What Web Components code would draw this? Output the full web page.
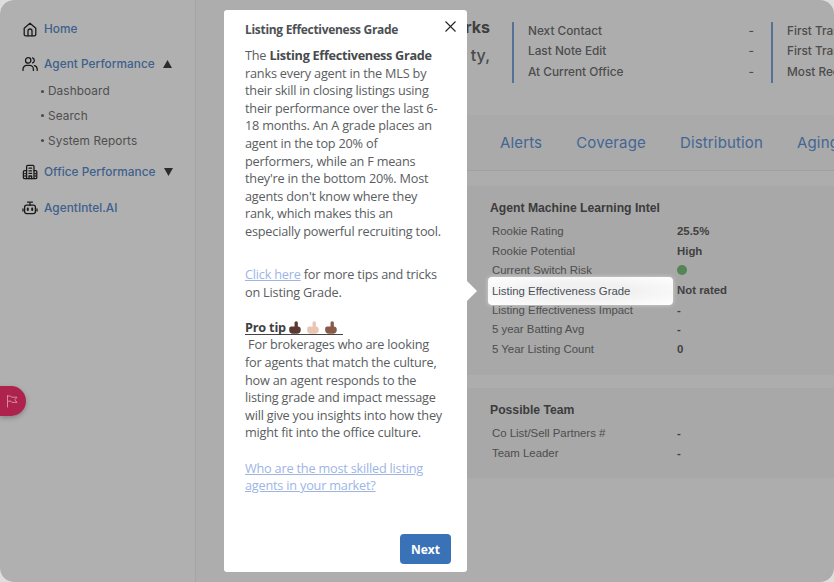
<!DOCTYPE html>
<html>
<head>
<meta charset="utf-8">
<title>Listing Effectiveness Grade</title>
<style>
  html, body { margin: 0; padding: 0; height: 100%; background: #dedede; }
  body { overflow: hidden; }
</style>
</head>
<body>
<app-shell>
  <side-nav slot="nav">
    <nav-item label="Home" icon="home"></nav-item>
    <nav-item label="Agent Performance" icon="users" caret="up">
      <sub-item>Dashboard</sub-item>
      <sub-item>Search</sub-item>
      <sub-item>System Reports</sub-item>
    </nav-item>
    <nav-item label="Office Performance" icon="office" caret="down"></nav-item>
    <nav-item label="AgentIntel.AI" icon="bot"></nav-item>
  </side-nav>

  <profile-header></profile-header>
  <tab-strip></tab-strip>

  <intel-card heading="Agent Machine Learning Intel">
    <intel-row label="Rookie Rating" value="25.5%"></intel-row>
    <intel-row label="Rookie Potential" value="High"></intel-row>
    <intel-row label="Current Switch Risk" dot></intel-row>
    <intel-row label="Listing Effectiveness Grade" value="Not rated" active></intel-row>
    <intel-row label="Listing Effectiveness Impact" value="-"></intel-row>
    <intel-row label="5 year Batting Avg" value="-"></intel-row>
    <intel-row label="5 Year Listing Count" value="0"></intel-row>
  </intel-card>
  <intel-card heading="Possible Team" class="second">
    <intel-row label="Co List/Sell Partners #" value="-"></intel-row>
    <intel-row label="Team Leader" value="-"></intel-row>
  </intel-card>

  <flag-button slot="over"></flag-button>
  <tour-popup slot="over"></tour-popup>
</app-shell>

<script>
(function () {
    const icons = {
        home: '<path d="M2.2 7.2 8 2.2l5.8 5v6.2a1.4 1.4 0 0 1-1.4 1.4H3.6a1.4 1.4 0 0 1-1.4-1.4z"/><path d="M6 14.800V10a2 2 0 0 1 4 0v4.800"/>',
        users: '<circle cx="6.2" cy="4.4" r="2.7"/><path d="M1 14.4v-1.2a3.8 3.8 0 0 1 3.8-3.8h2.8a3.8 3.8 0 0 1 3.8 3.8v1.2"/><path d="M10.6 1.9a2.7 2.7 0 0 1 0 5"/><path d="M12.4 9.6a3.8 3.8 0 0 1 2.8 3.6v1.2"/>',
        office: '<path d="M4.6 14.6V2.6a1.2 1.2 0 0 1 1.2-1.2h5a1.2 1.2 0 0 1 1.2 1.2v12"/><path d="M4.6 6.6H2.6a1.2 1.2 0 0 0-1.2 1.2v5.6a1.2 1.2 0 0 0 1.2 1.2h11a1.2 1.2 0 0 0 1.2-1.2V7.8a1.2 1.2 0 0 0-1.2-1.2H12"/><path d="M7 4.2h2.6M7 6.8h2.6M7 9.4h2.6M7 14.6v-2.6h2.6v2.6M2.8 9.6h.6M2.8 12h.6M13 9.6h.6M13 12h.6"/>',
        bot: '<rect x="2.6" y="5.2" width="10.8" height="8.4" rx="2"/><path d="M8 5.2V3.4M5.6 2.2h4.8M1 9v2M15 9v2"/><path d="M5.8 8.6v1.4M10.2 8.6v1.4" stroke-width="2"/>'
    };

    const shellTemplate = document.createElement("template");
    shellTemplate.innerHTML = `
    <style>
    :host {
        display: flex;
        position: relative;
        width: 834px;
        height: 582px;
        overflow: hidden;
        border-radius: 14px;
        background: #fbfbfb;
    }
    .nav { flex: 0 0 196px; border-right: 1px solid #f0f0f0; background: #fff; box-sizing: border-box; }
    .main { flex: 1; min-width: 0; padding-left: 44px; overflow: hidden; }
    .overlay { position: absolute; inset: 0; z-index: 10; background: rgba(0, 0, 0, .31); }
    </style>
    <div class="nav"><slot name="nav"></slot></div>
    <div class="main"><slot></slot></div>
    <div class="overlay"></div>
    <slot name="over"></slot>
    `;
    class AppShell extends HTMLElement {
        constructor() {
            super();
            this.attachShadow({mode: "open"}).appendChild(shellTemplate.content.cloneNode(true));
        }
    }

    const sideNavTemplate = document.createElement("template");
    sideNavTemplate.innerHTML = `
    <style>
    :host { display: flex; flex-direction: column; padding: 20px 0 0 22px; }
    </style>
    <slot></slot>
    `;
    class SideNav extends HTMLElement {
        constructor() {
            super();
            this.attachShadow({mode: "open"}).appendChild(sideNavTemplate.content.cloneNode(true));
        }
    }

    class NavItem extends HTMLElement {
        constructor() {
            super();
            this.attachShadow({mode: "open"});
        }
        connectedCallback() {
            const caret = this.getAttribute("caret");
            const glyph = caret === "up" ? '<path d="M0 8 4.5 0 9 8z"/>' : '<path d="M0 0h9L4.500 8z"/>';
            this.shadowRoot.innerHTML = `
            <style>
            :host { display: block; margin-bottom: 17.4px; font: 500 11.8px/18px Inter, sans-serif; }
            .row { display: flex; align-items: center; height: 18px; color: #5b8bcb; letter-spacing: .05px; }
            .icon { width: 16px; height: 16px; margin-right: 6px; fill: none; stroke: #262626; stroke-width: 1.3; stroke-linecap: round; stroke-linejoin: round; }
            .caret { width: 9px; height: 8px; margin-left: 8px; fill: #404040; }
            .subs { display: flex; flex-direction: column; gap: 6.6px; padding: 9px 0 0 19px; margin-bottom: -3.5px; }
            </style>
            <div class="row">
                <svg class="icon" viewBox="0 0 16 16">${icons[this.getAttribute("icon")]}</svg>
                <span>${this.getAttribute("label")}</span>
                ${caret ? `<svg class="caret" viewBox="0 0 9 8">${glyph}</svg>` : ""}
            </div>
            <div class="subs"><slot></slot></div>
            `;
            if (!this.children.length) this.shadowRoot.querySelector(".subs").remove();
        }
    }

    const subItemTemplate = document.createElement("template");
    subItemTemplate.innerHTML = `
    <style>
    :host { display: flex; align-items: center; font: 400 11.8px/18px Inter, sans-serif; color: #737373; letter-spacing: .1px; }
    .dot { width: 3px; height: 3px; border-radius: 50%; background: #6a6a6a; margin-right: 4px; }
    </style>
    <span class="dot"></span><slot></slot>
    `;
    class SubItem extends HTMLElement {
        constructor() {
            super();
            this.attachShadow({mode: "open"}).appendChild(subItemTemplate.content.cloneNode(true));
        }
    }

    const headerTemplate = document.createElement("template");
    headerTemplate.innerHTML = `
    <style>
    :host { display: flex; height: 115px; box-sizing: border-box; padding: 22px 0 0 0; margin-left: -44px; font: 500 11.8px/20.3px Inter, sans-serif; color: #707070; white-space: nowrap; }
    .title { flex: none; width: 294px; padding-right: 22px; margin-top: -9px; text-align: right; font-size: 16px; line-height: 28px; color: #6a6a6a; }
    .title b { display: block; font-weight: 700; color: #5c5c5c; }
    .title span { display: block; font-weight: 500; }
    .col { flex: none; height: 61px; border-left: 2px solid #7ba4da; padding-left: 14px; box-sizing: border-box; }
    .first { width: 259px; padding-right: 17px; }
    .col div { display: flex; justify-content: space-between; height: 20.3px; margin-top: -1px; margin-bottom: 1px; }
    </style>
    <div class="title"><b>rks</b><span>ty,</span></div>
    <div class="col first">
        <div><span>Next Contact</span><span>-</span></div>
        <div><span>Last Note Edit</span><span>-</span></div>
        <div><span>At Current Office</span><span>-</span></div>
    </div>
    <div class="col">
        <div><span>First Tran</span></div>
        <div><span>First Tran</span></div>
        <div><span>Most Rec</span></div>
    </div>
    `;
    class ProfileHeader extends HTMLElement {
        constructor() {
            super();
            this.attachShadow({mode: "open"}).appendChild(headerTemplate.content.cloneNode(true));
        }
    }

    const tabsTemplate = document.createElement("template");
    tabsTemplate.innerHTML = `
    <style>
    :host { display: flex; align-items: center; height: 56px; margin-bottom: 15px; box-sizing: border-box; padding: 1px 0 0 260px; gap: 34px; border-bottom: 1px solid #e8e8e8; background: #f7f7f7; font: 400 15px/20px Inter, sans-serif; letter-spacing: .15px; color: #6294d6; white-space: nowrap; overflow: hidden; }
    </style>
    <span>Alerts</span><span>Coverage</span><span>Distribution</span><span>Aging</span>
    `;
    class TabStrip extends HTMLElement {
        constructor() {
            super();
            this.attachShadow({mode: "open"}).appendChild(tabsTemplate.content.cloneNode(true));
        }
    }

    class IntelCard extends HTMLElement {
        constructor() {
            super();
            this.attachShadow({mode: "open"});
        }
        connectedCallback() {
            this.shadowRoot.innerHTML = `
            <style>
            :host { display: block; margin-bottom: 13px; padding: 13px 0 15px 248px; background: #f3f3f3; font: 11.4px/20px "Liberation Sans", Arial, sans-serif; }
            h3 { margin: 0 0 5px 2px; font: 700 12.2px/18px "Liberation Sans", Arial, sans-serif; color: #585858; }
            </style>
            <h3>${this.getAttribute("heading")}</h3>
            <slot></slot>
            `;
        }
    }

    class IntelRow extends HTMLElement {
        constructor() {
            super();
            this.attachShadow({mode: "open"});
        }
        connectedCallback() {
            const value = this.hasAttribute("dot") ? '<i class="dot"></i>' : this.getAttribute("value");
            this.shadowRoot.innerHTML = `
            <style>
            :host { display: flex; height: 19.7px; line-height: 19.7px; color: #717171; white-space: nowrap; }
            .label { width: 185px; box-sizing: border-box; padding-left: 4px; }
            .value { padding-left: 4px; font-weight: 700; color: #5e5e5e; }
            .dot { display: inline-block; width: 10px; height: 10px; border-radius: 50%; background: #7cc07c; vertical-align: -1px; }
            :host([active]) .label {
                position: relative;
                z-index: 20;
                height: 28px;
                margin-top: -4px;
                line-height: 28px;
                color: #4a4f57;
                border-radius: 4px;
                background: radial-gradient(ellipse at center, #f1f1f1 40%, #fff 100%);
                box-shadow: 0 0 4px rgba(255, 255, 255, .5);
            }
            </style>
            <span class="label">${this.getAttribute("label")}</span>
            <span class="value">${value}</span>
            `;
        }
    }

    const flagTemplate = document.createElement("template");
    flagTemplate.innerHTML = `
    <style>
    :host { position: absolute; left: 0; top: 386px; z-index: 11; display: flex; align-items: center; justify-content: center; width: 26px; height: 30px; box-sizing: border-box; padding-right: 2px; border-radius: 0 15px 15px 0; background: #ad234e; box-shadow: 0 2px 5px rgba(0, 0, 0, .25); }
    svg { width: 14px; height: 14px; fill: none; stroke: #d98aa2; stroke-width: 1; stroke-linejoin: round; stroke-linecap: round; }
    </style>
    <svg viewBox="0 0 14 14"><path d="M2.500 13V1.600M2.500 2h3l1 1.200H12L9.800 5.800 12 8.400H7L6 7.200H2.500"/></svg>
    `;
    class FlagButton extends HTMLElement {
        constructor() {
            super();
            this.attachShadow({mode: "open"}).appendChild(flagTemplate.content.cloneNode(true));
        }
    }

    const hand = tone => `<svg class="hand" viewBox="0 0 13 14"><path fill="${tone}" d="M7.800 0.200c1.100 0 1.800.8 1.800 1.800v3.800c1.900.2 3.100 1 3.100 2.800v1.400c0 2.300-1.700 3.900-4 3.900H4.400C1.900 14 .2 12.300.2 10V8.200c0-1.300.9-2.200 2.200-2.200H6V2c0-1 .7-1.800 1.800-1.800z"/></svg>`;

    const popupTemplate = document.createElement("template");
    popupTemplate.innerHTML = `
    <style>
    :host { position: absolute; left: 224px; top: 10px; z-index: 12; display: flex; flex-direction: column; width: 243px; height: 562px; box-sizing: border-box; padding: 10px 16px 8px 21px; border-radius: 3px; background: #fff; font: 400 12.7px/17.6px "Open Sans", sans-serif; letter-spacing: -.2px; color: #5a5d61; }
    .arrow { position: absolute; right: -10px; top: 271px; width: 0; height: 0; border: 10px solid transparent; border-right-width: 0; border-left-color: #fff; }
    .close { position: absolute; right: 11px; top: 11px; width: 11px; height: 11px; fill: none; stroke: #222; stroke-width: 1.1; }
    h2 { margin: 0 0 8px; font: 700 12px/19px "Open Sans", sans-serif; letter-spacing: -.3px; color: #4d5054; }
    p { margin: 0 0 17.6px; white-space: nowrap; }
    p.gap { margin-bottom: 25.5px; }
    b { color: #474a4e; letter-spacing: -.3px; }
    a { color: #9db5e6; text-decoration: underline; }
    .tip { display: inline-block; border-bottom: 1px solid #444; line-height: 14.5px; font-weight: 700; color: #3c3f44; }
    .hand { width: 12px; height: 13px; vertical-align: -2px; margin-right: 6px; }
    .next { align-self: flex-end; margin-top: auto; width: 51px; height: 30px; padding: 0; border: 0; border-radius: 4px; background: #3a72b8; color: #fff; font: 700 12px "Open Sans", sans-serif; }
    </style>
    <span class="arrow"></span>
    <svg class="close" viewBox="0 0 11 11"><path d="M.5.5l10 10M10.500.5l-10 10"/></svg>
    <h2>Listing Effectiveness Grade</h2>
    <p class="gap">The <b>Listing Effectiveness Grade</b><br>ranks every agent in the MLS by<br>their skill in closing listings using<br>their performance over the last 6-<br>18 months. An A grade places an<br>agent in the top 20% of<br>performers, while an F means<br>they're in the bottom 20%. Most<br>agents don't know where they<br>rank, which makes this an<br>especially powerful recruiting tool.</p>
    <p><a>Click here</a> for more tips and tricks<br>on Listing Grade.</p>
    <p><span class="tip">Pro tip ${hand("#5b3a32")}${hand("#ecc5b2")}${hand("#8a5a48")}</span><br>&nbsp;For brokerages who are looking<br>for agents that match the culture,<br>how an agent responds to the<br>listing grade and impact message<br>will give you insights into how they<br>might fit into the office culture.</p>
    <p><a>Who are the most skilled listing<br>agents in your market?</a></p>
    <button class="next">Next</button>
    `;
    class TourPopup extends HTMLElement {
        constructor() {
            super();
            this.attachShadow({mode: "open"}).appendChild(popupTemplate.content.cloneNode(true));
        }
    }

    customElements.define("app-shell", AppShell);
    customElements.define("side-nav", SideNav);
    customElements.define("nav-item", NavItem);
    customElements.define("sub-item", SubItem);
    customElements.define("profile-header", ProfileHeader);
    customElements.define("tab-strip", TabStrip);
    customElements.define("intel-card", IntelCard);
    customElements.define("intel-row", IntelRow);
    customElements.define("flag-button", FlagButton);
    customElements.define("tour-popup", TourPopup);
}());
</script>
</body>
</html>
